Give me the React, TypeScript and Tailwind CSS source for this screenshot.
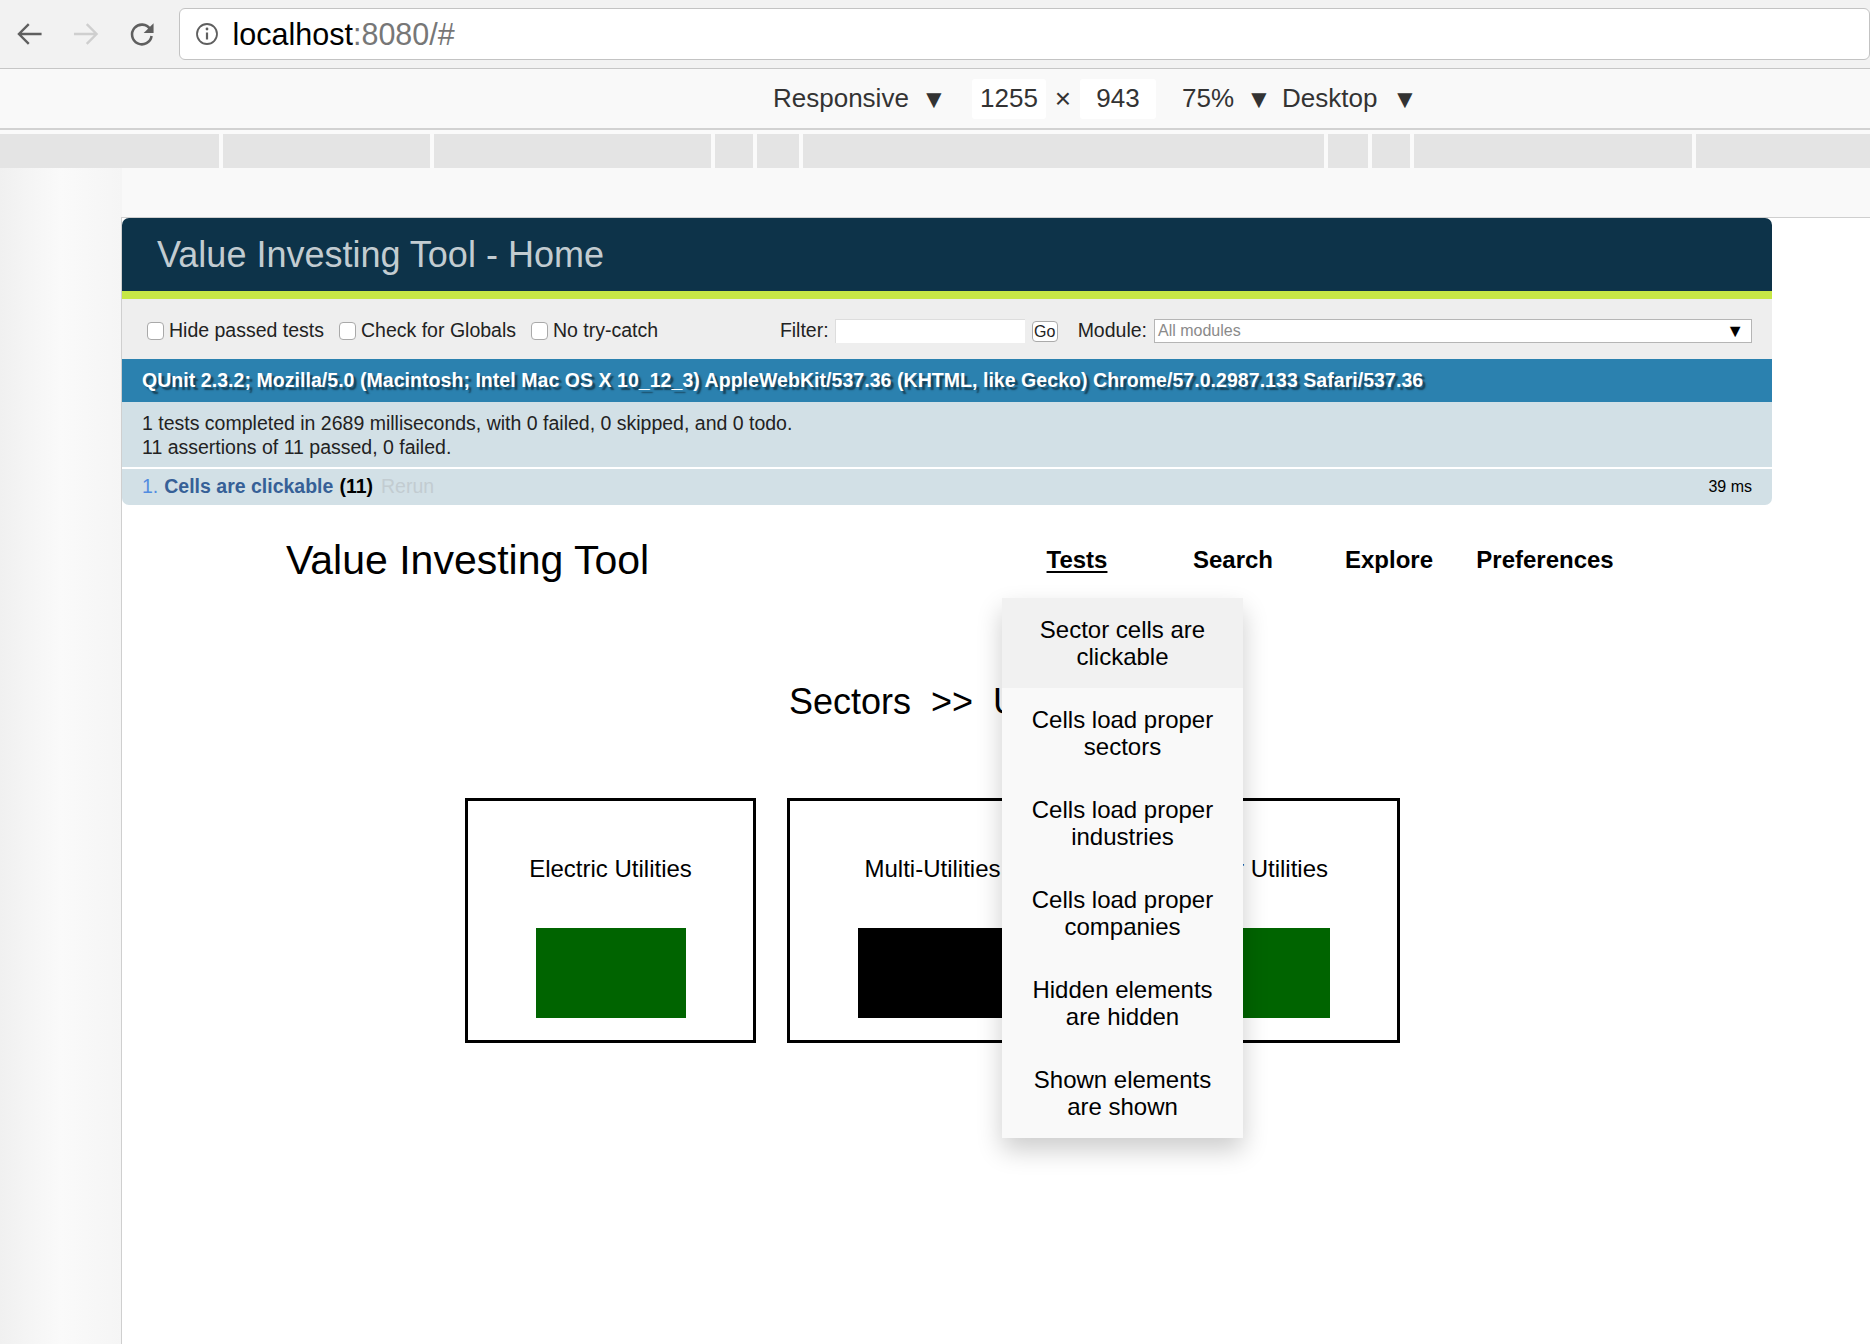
const rulerWidths = [219, 207, 277, 38, 42, 521, 40, 38, 278];

const testItems = [
  "Sector cells are clickable",
  "Cells load proper sectors",
  "Cells load proper industries",
  "Cells load proper companies",
  "Hidden elements are hidden",
  "Shown elements are shown",
];

const cells = [
  { name: "Electric Utilities", color: "bg-[#006400]" },
  { name: "Multi-Utilities", color: "bg-black" },
  { name: "Water Utilities", color: "bg-[#006400]" },
];

const Check = ({ label }: { label: string }) => (
  <label className="flex items-center mr-[15px]">
    <span className="w-[17px] h-[18px] rounded-[4px] border border-[#a9a9a9] bg-white mr-[5px]" />
    <span>{label}</span>
  </label>
);

const BrowserBar = () => (
  <div className="h-[69px] border-b border-[#c6c6c6] bg-[#f2f2f2] flex items-center">
    {/* back */}
    <svg width="28" height="28" viewBox="0 0 28 28" className="ml-[16px]">
      <path d="M26 14H3M13 4L3 14l10 10" fill="none" stroke="#5f5f5f" strokeWidth="2.4" />
    </svg>
    {/* forward */}
    <svg width="28" height="28" viewBox="0 0 28 28" className="ml-[28px]">
      <path d="M2 14h23M15 4l10 10-10 10" fill="none" stroke="#cfcfcf" strokeWidth="2.4" />
    </svg>
    {/* reload */}
    <svg width="30" height="30" viewBox="0 0 30 30" className="ml-[28px]">
      <path d="M23.5 10A10 10 0 1 0 25 17" fill="none" stroke="#5f5f5f" strokeWidth="2.6" />
      <path d="M27 4v10H17z" fill="#5f5f5f" />
    </svg>
    <div className="ml-[22px] h-[52px] w-[1720px] bg-white border border-[#c3c3c3] rounded-[6px] flex items-center">
      <svg width="24" height="24" viewBox="0 0 24 24" className="ml-[15px]">
        <circle cx="12" cy="12" r="10" fill="none" stroke="#5f5f5f" strokeWidth="1.8" />
        <path d="M12 10.5v7" stroke="#5f5f5f" strokeWidth="2.2" />
        <circle cx="12" cy="7" r="1.4" fill="#5f5f5f" />
      </svg>
      <span className="ml-[14px] text-[30.5px] leading-none text-black">
        localhost<span className="text-[#777]">:8080/#</span>
      </span>
    </div>
  </div>
);

const DeviceBar = () => (
  <div className="h-[61px] bg-[#f9f9f9] border-b-2 border-[#d2d2d2] flex items-center text-[26px] text-[#333]">
    <span className="ml-[773px] w-[148px]">Responsive</span>
    <span className="w-[20px] text-[26px] leading-none">▼</span>
    <span className="ml-[31px] w-[74px] h-[40px] bg-white rounded-[3px] flex items-center justify-center">1255</span>
    <span className="w-[34px] text-center text-[28px] leading-none">×</span>
    <span className="w-[76px] h-[40px] bg-white rounded-[3px] flex items-center justify-center">943</span>
    <span className="ml-[26px] w-[64px]">75%</span>
    <span className="w-[20px] text-[26px] leading-none">▼</span>
    <span className="ml-[16px] w-[110px]">Desktop</span>
    <span className="w-[20px] text-[26px] leading-none">▼</span>
  </div>
);

const Ruler = () => (
  <div className="pt-[4px] bg-[#fafafa]">
    <div className="h-[34px] flex gap-[4px]">
      {rulerWidths.map((w, i) => (
        <div key={i} className="h-full bg-[#e4e4e4]" style={{ width: w }} />
      ))}
      <div className="h-full flex-1 bg-[#e4e4e4]" />
    </div>
  </div>
);

const QUnitPanel = () => (
  <div className="w-[1650px] text-[19.5px]">
    <h1 className="h-[73px] bg-[#0d3349] rounded-t-[7px] pl-[35px] text-[36px] leading-[73px] text-[#c2ccd1] font-normal">
      Value Investing Tool - Home
    </h1>
    <div className="h-[8px] bg-[#c6e746]" />
    <div className="h-[60px] bg-[#eeeeee] flex items-center pt-[4px] pl-[25px] pr-[20px] text-[#222]">
      <Check label="Hide passed tests" />
      <Check label="Check for Globals" />
      <Check label="No try-catch" />
      <div className="ml-auto flex items-center">
        <span>Filter:</span>
        <span className="ml-[6px] w-[190px] h-[24px] bg-white border-t border-l border-[#ddd]" />
        <span className="ml-[7px] w-[26px] h-[21px] rounded-[4px] border border-[#aaa] bg-white text-[16px] leading-[19px] text-center">
          Go
        </span>
        <span className="ml-[20px]">Module:</span>
        <div className="ml-[7px] w-[598px] h-[24px] bg-white border border-[#b5b5b5] flex items-center justify-between px-[3px]">
          <span className="text-[16px] text-[#8a8a8a]">All modules</span>
          <span className="text-[18px] text-black mr-[4px]">▼</span>
        </div>
      </div>
    </div>
    <div className="h-[43px] bg-[#2b81af] flex items-center px-[20px] text-white font-bold tracking-[0.05px] whitespace-nowrap [text-shadow:3px_3px_1.5px_rgba(0,0,0,0.5)]">
      QUnit 2.3.2; Mozilla/5.0 (Macintosh; Intel Mac OS X 10_12_3) AppleWebKit/537.36 (KHTML, like Gecko) Chrome/57.0.2987.133 Safari/537.36
    </div>
    <div className="h-[67px] bg-[#d2e0e6] border-b-2 border-white pl-[20px] pt-[9px] leading-[24px] text-[#222]">
      <div>1 tests completed in 2689 milliseconds, with 0 failed, 0 skipped, and 0 todo.</div>
      <div>11 assertions of 11 passed, 0 failed.</div>
    </div>
    <div className="h-[36px] bg-[#d2e0e6] rounded-b-[7px] flex items-center px-[20px]">
      <span className="text-[#528ce0]">1.</span>
      <strong className="ml-[6px] text-[#366097]">Cells are clickable</strong>
      <strong className="ml-[6px] text-black">(11)</strong>
      <span className="ml-[8px] text-[#c2ccd1]">Rerun</span>
      <span className="ml-auto text-[16px] text-black">39 ms</span>
    </div>
  </div>
);

const AppPage = () => (
  <div className="text-black">
    <div className="mt-[32px] h-[46px] flex items-center">
      <div className="w-[877px] pl-[164px] text-[41px] leading-[46px]">Value Investing Tool</div>
      <nav className="flex text-[24px] font-bold">
        <div className="relative w-[156px] text-center">
          <span className="underline decoration-2 underline-offset-[3px]">Tests</span>
          <div className="absolute z-10 top-[56px] left-[3px] w-[241px] bg-[#f9f9f9] shadow-[0_12px_24px_0_rgba(0,0,0,0.2)] font-normal">
            {testItems.map((t, i) => (
              <div
                key={t}
                className={`px-[24px] py-[18px] leading-[27px] text-center ${i === 0 ? "bg-[#f1f1f1]" : ""}`}
              >
                {t}
              </div>
            ))}
          </div>
        </div>
        <div className="w-[156px] text-center">Search</div>
        <div className="w-[156px] text-center">Explore</div>
        <div className="w-[156px] text-center">Preferences</div>
      </nav>
    </div>

    <h2 className="mt-[98px] pl-[667px] text-[36px] leading-[41px] font-normal whitespace-nowrap">
      Sectors&nbsp;&nbsp;&gt;&gt;&nbsp;&nbsp;Utilities
    </h2>

    <div className="mt-[76px] pl-[343px] flex gap-[31px]">
      {cells.map((c) => (
        <div
          key={c.name}
          className="w-[291px] h-[245px] border-[3px] border-black flex flex-col items-center pt-[54px]"
        >
          <div className="text-[24px] leading-[27px]">{c.name}</div>
          <div className={`mt-[46px] w-[150px] h-[90px] ${c.color}`} />
        </div>
      ))}
    </div>
  </div>
);

export default function App() {
  return (
    <div className="w-[1870px] h-[1344px] overflow-hidden bg-[#f2f2f2] font-['Liberation_Sans',Arial,sans-serif] flex flex-col">
      <BrowserBar />
      <DeviceBar />
      <Ruler />
      <div className="flex-1 bg-gradient-to-r from-[#f0f0f0] via-[#fafafa] to-[#f5f5f5] bg-no-repeat bg-[length:122px_100%] bg-[#f9f9f9] flex flex-col">
        <div className="flex-1 mt-[49px] ml-[121px] bg-white border-l border-t border-[#cfcfcf] overflow-hidden">
          <QUnitPanel />
          <AppPage />
        </div>
      </div>
    </div>
  );
}
